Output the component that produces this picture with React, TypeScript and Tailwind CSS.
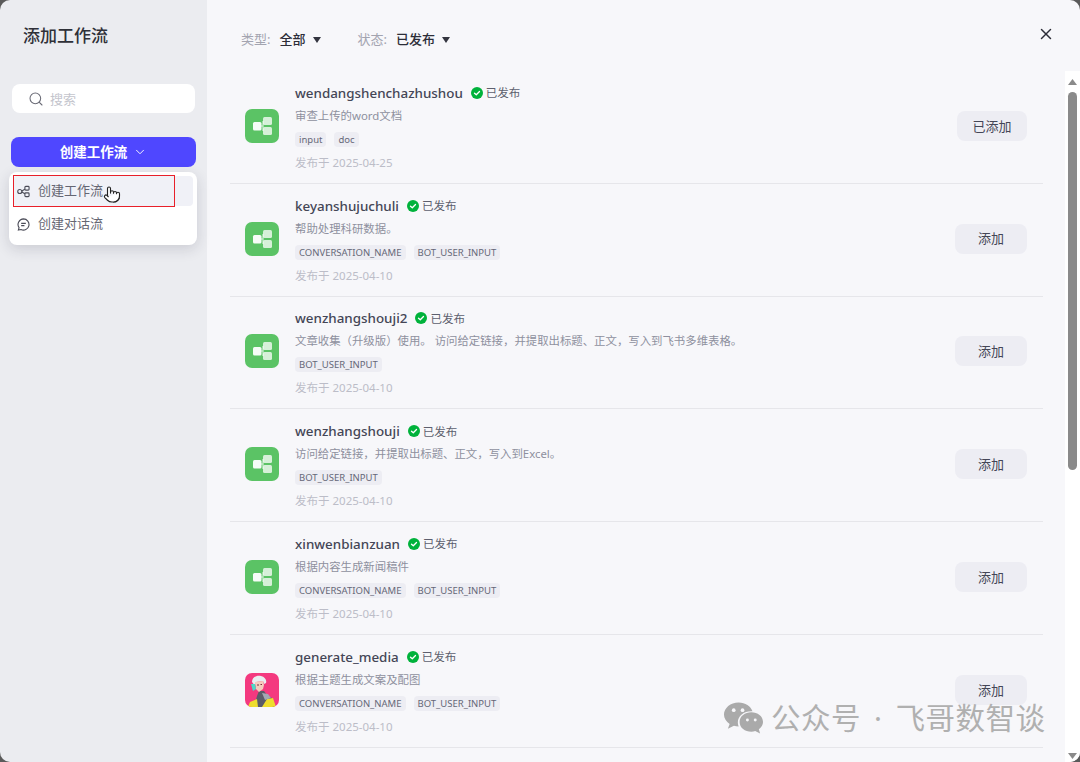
import React from 'react';
import { ChevronDown, Search, X, Pointer } from 'lucide-react';

type Flow = {
  name: string;
  desc: string;
  tags: string[];
  date: string;
  added?: boolean;
  avatar?: boolean;
};

const FLOWS: Flow[] = [
  { name: 'wendangshenchazhushou', desc: '审查上传的word文档', tags: ['input', 'doc'], date: '2025-04-25', added: true },
  { name: 'keyanshujuchuli', desc: '帮助处理科研数据。', tags: ['CONVERSATION_NAME', 'BOT_USER_INPUT'], date: '2025-04-10' },
  { name: 'wenzhangshouji2', desc: '文章收集（升级版）使用。 访问给定链接，并提取出标题、正文，写入到飞书多维表格。', tags: ['BOT_USER_INPUT'], date: '2025-04-10' },
  { name: 'wenzhangshouji', desc: '访问给定链接，并提取出标题、正文，写入到Excel。', tags: ['BOT_USER_INPUT'], date: '2025-04-10' },
  { name: 'xinwenbianzuan', desc: '根据内容生成新闻稿件', tags: ['CONVERSATION_NAME', 'BOT_USER_INPUT'], date: '2025-04-10' },
  { name: 'generate_media', desc: '根据主题生成文案及配图', tags: ['CONVERSATION_NAME', 'BOT_USER_INPUT'], date: '2025-04-10', avatar: true },
];

const FONT = "font-['Noto_Sans','Noto_Sans_CJK_SC',sans-serif]";

const FlowIcon = () => (
  <svg viewBox="0 0 34 34" className="w-[34px] h-[34px] shrink-0 -mt-[2px]">
    <rect width="34" height="34" rx="7" fill="#5bc365" />
    <rect x="8" y="13" width="8.5" height="8.5" rx="1.5" fill="#fff" fillOpacity="0.95" />
    <path d="M16 17h2M18 12v10" stroke="#fff" strokeOpacity="0.7" strokeWidth="1.2" fill="none" />
    <rect x="18" y="8" width="9" height="8" rx="1.5" fill="#fff" fillOpacity="0.75" />
    <rect x="18" y="18" width="9" height="8" rx="1.5" fill="#fff" fillOpacity="0.75" />
  </svg>
);

const AvatarIcon = () => (
  <svg viewBox="0 0 34 34" className="w-[34px] h-[34px] shrink-0 -mt-[2px]">
    <defs>
      <clipPath id="av">
        <rect width="34" height="34" rx="7" />
      </clipPath>
    </defs>
    <g clipPath="url(#av)">
      <rect width="34" height="34" fill="#f4397f" />
      <path d="M9 34l3-11 2-5h5l3 4 5 3 2 9z" fill="#5a5c68" />
      <path d="M3 34l2-5 7-3 1 8zM17 34l5-8 6-1 3 9z" fill="#eedd2c" />
      <path d="M17 20l6 1 3 4-6 2z" fill="#a2a8b4" />
      <path d="M7 9c0-5 5-7 9-6 4 1 6 4 5 7l-2 1-1-3-7 1-1 4z" fill="#e9edf0" />
      <path d="M10 9l8-1 1 4-1 4-4 3-3-3z" fill="#f6cdbd" />
      <path d="M6 11l4 0 1 5-3 2z" fill="#4ed9c8" />
      <path d="M12 12h2M15.500 11.500h1.500" stroke="#7a3045" strokeWidth="1" />
    </g>
  </svg>
);

const CheckBadge = () => (
  <svg viewBox="0 0 12 12" className="w-3 h-3 shrink-0">
    <circle cx="6" cy="6" r="6" fill="#00b23b" />
    <path d="M3.500 6.200l1.800 1.600 3.200-3.300" stroke="#fff" strokeWidth="1.300" fill="none" strokeLinecap="round" strokeLinejoin="round" />
  </svg>
);

const Row = ({ flow }: { flow: Flow }) => (
  <div className="h-[112.8px] shrink-0 border-b border-[#e6e6ea] flex items-center pl-[15px] pr-4">
    {flow.avatar ? <AvatarIcon /> : <FlowIcon />}
    <div className="ml-4 flex-1 min-w-0">
      <div className="flex items-center h-5">
        <span className="text-[13.400px] font-medium text-[#444656] leading-5">{flow.name}</span>
        <span className="ml-2"><CheckBadge /></span>
        <span className="ml-[3px] text-[11.500px] text-[#5d5f6e]">已发布</span>
      </div>
      <div className="mt-[3px] h-5 text-[11.400px] leading-5 text-[#8e909e]">{flow.desc}</div>
      <div className="mt-[6px] flex gap-2">
        {flow.tags.map(tag => (
          <span key={tag} className="h-[15px] px-1 rounded bg-[#ededf3] text-[9.500px] leading-[15px] text-[#666878]">{tag}</span>
        ))}
      </div>
      <div className="mt-[8px] text-[11.500px] leading-4 text-[#bcbdc8]">发布于 {flow.date}</div>
    </div>
    <button className={`h-[30px] -mt-[2px] pt-px rounded-lg bg-[#ededf3] text-[13px] text-[#444656] ${flow.added ? 'w-[70px]' : 'w-[72px]'}`}>
      {flow.added ? '已添加' : '添加'}
    </button>
  </div>
);

const Filter = ({ label, value }: { label: string; value: string }) => (
  <div className="flex items-center text-[13px]">
    <span className="text-[#a3a4b0]">{label}:</span>
    <span className="ml-[9px] text-[#2c2d38] font-medium">{value}</span>
    <svg viewBox="0 0 8 6" className="ml-[7px] w-2 h-[6px]"><path d="M0 0h8L4 6z" fill="#33343f" /></svg>
  </div>
);

export default function App() {
  return (
    <div className={`relative w-[1080px] h-[762px] bg-[#5a5a5a] overflow-hidden ${FONT}`}>
      <div className="w-full h-full rounded-[10px] overflow-hidden flex">
        {/* Sidebar */}
        <aside className="w-[207px] shrink-0 bg-[#ebecf0] flex flex-col pl-3 pr-3">
          <h1 className="mt-[24px] ml-[11px] text-[17px] leading-6 font-medium text-[#2f3038]">添加工作流</h1>
          <div className="mt-[36px] h-[29px] rounded-lg bg-white flex items-center pl-4">
            <Search className="w-4 h-4 text-[#6c6d78]" strokeWidth={1.6} />
            <span className="ml-[6px] mt-[2px] text-[13px] text-[#c4c5cd]">搜索</span>
          </div>
          <button className="mt-6 -mx-px h-[30px] rounded-lg bg-[#4f47ff] text-white flex items-center justify-center text-[13.500px] font-bold">
            <span className="mt-px">创建工作流</span>
            <ChevronDown className="ml-[6px] w-[14px] h-[14px]" strokeWidth={1.6} />
          </button>
        </aside>

        {/* Main */}
        <main className="flex-1 min-w-0 bg-[#f7f7fa] flex flex-col">
          <header className="h-[71px] shrink-0 flex items-start pl-[34px] pr-[27px] pt-[30px] gap-[37px] relative">
            <Filter label="类型" value="全部" />
            <Filter label="状态" value="已发布" />
            <X className="absolute right-[25px] top-[25px] w-[18px] h-[18px] text-[#2c2d38]" strokeWidth={2} />
          </header>
          <div className="flex-1 min-h-0 flex">
            <div className="flex-1 min-w-0 pl-[23px] pr-[22px] flex flex-col overflow-hidden">
              {FLOWS.map(flow => <Row key={flow.name} flow={flow} />)}
            </div>
            <div className="w-[15px] shrink-0 bg-white flex flex-col items-center pt-[8px]">
              <svg viewBox="0 0 9 6" className="w-[9px] h-[6px] shrink-0"><path d="M4.500 0L9 6H0z" fill="#8a8a8a" /></svg>
              <div className="mt-[7px] w-[9px] h-[378px] rounded-full bg-[#8a8a8a]" />
              <div className="flex-1" />
              <svg viewBox="0 0 9 6" className="w-[9px] h-[6px] shrink-0 mb-[3px]"><path d="M0 0h9L4.500 6z" fill="#8a8a8a" /></svg>
            </div>
          </div>
        </main>
      </div>

      {/* Dropdown menu */}
      <div className="absolute left-[9px] top-[172px] w-[188px] h-[73px] rounded-lg bg-white p-1 shadow-[0_4px_14px_rgba(40,40,60,0.16)]">
        <div className="h-[30px] rounded bg-[#f0f1f7] flex items-center pl-1 text-[13px] text-[#656673]">
          <svg viewBox="0 0 14 14" className="w-[13px] h-[13px]" fill="none" stroke="#4b4c58" strokeWidth="1.200">
            <circle cx="3" cy="7" r="2.200" />
            <rect x="8.500" y="1.500" width="4.500" height="4" rx="1" />
            <rect x="8.500" y="8.500" width="4.500" height="4" rx="1" />
            <path d="M5.200 6.500l3.300-2M5.200 7.500l3.300 2" />
          </svg>
          <span className="ml-2">创建工作流</span>
        </div>
        <div className="mt-[3px] h-[30px] flex items-center pl-1 text-[13px] text-[#656673]">
          <svg viewBox="0 0 14 14" className="w-[13px] h-[13px]" fill="none" stroke="#4b4c58" strokeWidth="1.200">
            <path d="M7 1a6 6 0 1 1-2.700 11.400L1.500 13l.7-2.600A6 6 0 0 1 7 1z" />
            <path d="M4.500 5.800h5M4.500 8.200h3.500" />
          </svg>
          <span className="ml-2">创建对话流</span>
        </div>
      </div>

      {/* Annotation on top of the screenshot */}
      <div className="absolute left-[13px] top-[175px] w-[162px] h-[32px] border border-[#e8202a]" />
      <Pointer className="absolute left-[103px] top-[184px] w-[18px] h-[21px] text-[#222] fill-white" strokeWidth={1.5} />

      {/* Watermark */}
      <div className="absolute left-[723px] top-[698px] flex items-center text-[29.500px] leading-10 text-[#b0b0b0] whitespace-nowrap tracking-[0.5px]">
        <svg viewBox="0 0 42 34" className="w-[41px] h-[34px] mr-[7px]" fill="#aaaaaa">
          <path d="M16 1C7.700 1 1 6.700 1 13.500c0 4 2.300 7.400 5.800 9.700L5 28l6.200-3c1.500.4 3 .6 4.800.6-.5-1.300-.8-2.700-.8-4.100C15.200 14.800 21.300 10 29 10c.5 0 .8 0 1.200.1C28.500 4.800 22.800 1 16 1z" />
          <path d="M41 21c0-6-5.600-10-12-10s-12 4-12 10 5.600 10 12 10c1.500 0 2.800-.2 4-.6l5 2.600-1.300-4.400C39.300 26.600 41 24 41 21z" />
          <circle cx="11" cy="9" r="1.900" fill="#f7f7fa" />
          <circle cx="20" cy="9" r="1.900" fill="#f7f7fa" />
          <circle cx="25" cy="19" r="1.500" fill="#f7f7fa" />
          <circle cx="33" cy="19" r="1.500" fill="#f7f7fa" />
        </svg>
        <span>公众号</span>
        <span className="mx-[13px]">·</span>
        <span>飞哥数智谈</span>
      </div>
    </div>
  );
}
